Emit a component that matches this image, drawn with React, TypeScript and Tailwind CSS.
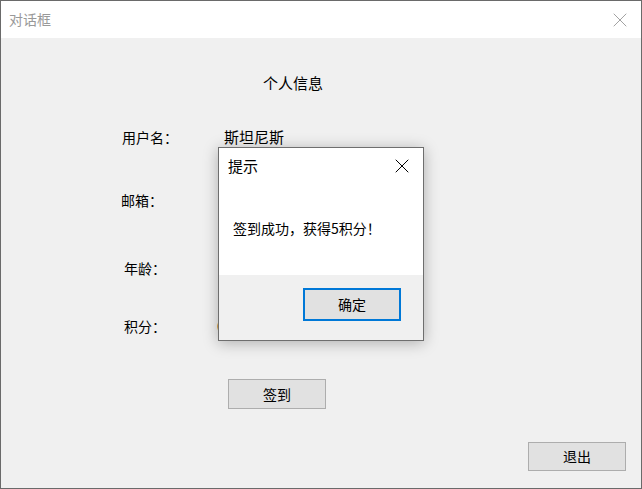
import { X } from "lucide-react";

const font = { fontFamily: '"Noto Sans CJK SC", "Noto Sans", sans-serif' };

function Row({ label, value, labelPad, top }: { label: string; value: string; labelPad: string; top: string }) {
  return (
    <div className={`flex items-center h-5 ${top}`}>
      <div className={`w-[223px] ${labelPad} text-[14px] text-black`}>{label}</div>
      <div className="text-[15px] text-black">{value}</div>
    </div>
  );
}

export default function App() {
  return (
    <div className="w-[642px] h-[489px] overflow-hidden" style={font}>
      <div className="relative w-[642px] h-[489px] border border-[#6a6a6a] bg-[#f0f0f0] flex flex-col">
        {/* Title bar */}
        <div className="h-[37px] bg-white flex items-center justify-between pl-2 pr-[9px] shrink-0">
          <span className="text-[14px] text-[#999999]">对话框</span>
          <X className="w-[24px] h-[24px] text-[#8a8a8a]" strokeWidth={0.8} />
        </div>

        {/* Body */}
        <div className="flex flex-col">
          <div className="mt-[35px] pl-[262px] h-5 flex items-center text-[15px] text-black">个人信息</div>
          <Row label="用户名：" value="斯坦尼斯" labelPad="pl-[121px]" top="mt-[34px]" />
          <Row label="邮箱：" value="" labelPad="pl-[120px]" top="mt-[43px]" />
          <div className="flex items-center h-5 mt-[48px]">
            <div className="w-[217px] pl-[123px] text-[14px] text-black">年龄：</div>
            <div className="text-[15px] text-black">20</div>
          </div>
          <div className="flex items-center h-5 mt-[38px]">
            <div className="w-[216px] pl-[123px] text-[14px] text-black">积分：</div>
            <div className="text-[15px] text-black">0</div>
          </div>
          <div className="mt-[43px] pl-[227px]">
            <button className="w-[98px] h-[30px] border border-[#adadad] bg-[#e1e1e1] text-[14px] text-black">签到</button>
          </div>
          <div className="mt-[33px] pl-[527px]">
            <button className="w-[98px] h-[29px] border border-[#adadad] bg-[#e1e1e1] text-[14px] text-black">退出</button>
          </div>
        </div>

        {/* Message box */}
        <div className="absolute left-[217px] top-[146px] w-[206px] h-[194px] border border-[#6e6e6e] bg-white flex flex-col shadow-[0_2px_14px_rgba(0,0,0,0.28)]">
          <div className="h-[38px] flex items-center justify-between pl-[9px] pr-[9px] pb-[2px]">
            <span className="text-[15px] text-black">提示</span>
            <X className="w-[24px] h-[24px] text-black" strokeWidth={1} />
          </div>
          <div className="h-[89px] flex items-center pl-[14px] pb-[4px]">
            <span className="text-[14px] text-black">签到成功，获得5积分！</span>
          </div>
          <div className="flex-1 bg-[#f0f0f0] flex justify-end items-start pt-[13px] pr-[22px]">
            <button className="w-[98px] h-[33px] border-2 border-[#0078d7] bg-[#e1e1e1] text-[14px] text-black">确定</button>
          </div>
        </div>
      </div>
    </div>
  );
}
